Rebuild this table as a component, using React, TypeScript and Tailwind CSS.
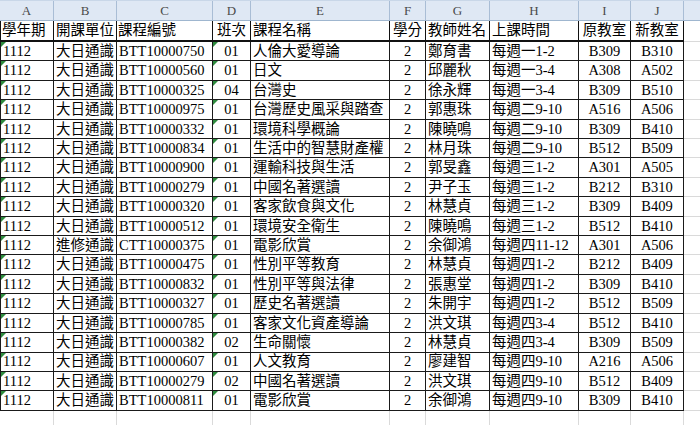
import React from "react";

const cols = [
  { w: "w-[54px]", al: "justify-start pl-[2px]", tri: true },
  { w: "w-[63px]", al: "justify-start pl-[2px]", tri: false },
  { w: "w-[96px]", al: "justify-start pl-[2px]", tri: false },
  { w: "w-[38px]", al: "justify-center", tri: true },
  { w: "w-[139px]", al: "justify-start pl-[2px]", tri: false },
  { w: "w-[36px]", al: "justify-center", tri: false },
  { w: "w-[64px]", al: "justify-start pl-[2px]", tri: false },
  { w: "w-[89px]", al: "justify-start pl-[2px]", tri: false },
  { w: "w-[52px]", al: "justify-center", tri: false },
  { w: "w-[53px]", al: "justify-center", tri: false },
];

const letters = ["A", "B", "C", "D", "E", "F", "G", "H", "I", "J"];

const header = ["學年期", "開課單位", "課程編號", "班次", "課程名稱", "學分", "教師姓名", "上課時間", "原教室", "新教室"];
const headerAlign = [
  "justify-start pl-[1px]",
  "justify-start pl-[2px]",
  "justify-start pl-[1px]",
  "justify-center",
  "justify-start pl-[2px]",
  "justify-center",
  "justify-start pl-[2px]",
  "justify-start pl-[2px]",
  "justify-center",
  "justify-center",
];

const rows: string[][] = [
  ["1112", "大日通識", "BTT10000750", "01", "人倫大愛導論", "2", "鄭育書", "每週一1-2", "B309", "B310"],
  ["1112", "大日通識", "BTT10000560", "01", "日文", "2", "邱麗秋", "每週一3-4", "A308", "A502"],
  ["1112", "大日通識", "BTT10000325", "04", "台灣史", "2", "徐永輝", "每週一3-4", "B309", "B510"],
  ["1112", "大日通識", "BTT10000975", "01", "台灣歷史風采與踏查", "2", "郭惠珠", "每週二9-10", "A516", "A506"],
  ["1112", "大日通識", "BTT10000332", "01", "環境科學概論", "2", "陳曉鳴", "每週二9-10", "B309", "B410"],
  ["1112", "大日通識", "BTT10000834", "01", "生活中的智慧財產權", "2", "林月珠", "每週二9-10", "B512", "B509"],
  ["1112", "大日通識", "BTT10000900", "01", "運輸科技與生活", "2", "郭旻鑫", "每週三1-2", "A301", "A505"],
  ["1112", "大日通識", "BTT10000279", "01", "中國名著選讀", "2", "尹子玉", "每週三1-2", "B212", "B310"],
  ["1112", "大日通識", "BTT10000320", "01", "客家飲食與文化", "2", "林慧貞", "每週三1-2", "B309", "B409"],
  ["1112", "大日通識", "BTT10000512", "01", "環境安全衛生", "2", "陳曉鳴", "每週三1-2", "B512", "B410"],
  ["1112", "進修通識", "CTT10000375", "01", "電影欣賞", "2", "余御鴻", "每週四11-12", "A301", "A506"],
  ["1112", "大日通識", "BTT10000475", "01", "性別平等教育", "2", "林慧貞", "每週四1-2", "B212", "B409"],
  ["1112", "大日通識", "BTT10000832", "01", "性別平等與法律", "2", "張惠堂", "每週四1-2", "B309", "B410"],
  ["1112", "大日通識", "BTT10000327", "01", "歷史名著選讀", "2", "朱開宇", "每週四1-2", "B512", "B509"],
  ["1112", "大日通識", "BTT10000785", "01", "客家文化資產導論", "2", "洪文琪", "每週四3-4", "B512", "B410"],
  ["1112", "大日通識", "BTT10000382", "02", "生命關懷", "2", "林慧貞", "每週四3-4", "B309", "B509"],
  ["1112", "大日通識", "BTT10000607", "01", "人文教育", "2", "廖建智", "每週四9-10", "A216", "A506"],
  ["1112", "大日通識", "BTT10000279", "02", "中國名著選讀", "2", "洪文琪", "每週四9-10", "B512", "B409"],
  ["1112", "大日通識", "BTT10000811", "01", "電影欣賞", "2", "余御鴻", "每週四9-10", "B309", "B410"],
];

function Tri() {
  return (
    <span className="absolute left-0 top-0 w-0 h-0 border-t-[5px] border-r-[5px] border-t-[#2e8b3e] border-r-transparent" />
  );
}

export default function App() {
  return (
    <div
      className="w-[700px] h-[425px] overflow-hidden bg-white text-black"
      style={{ fontFamily: '"Liberation Serif", "Noto Sans CJK TC", serif' }}
    >
      {/* column letters */}
      <div className="flex h-[21px] bg-[#dfe8f4] border-t border-[#c9d7e8] border-b border-b-[#9fb6cf]">
        {cols.map((c, i) => (
          <div
            key={i}
            className={`${c.w} shrink-0 flex items-center justify-center border-r border-[#a9bdd5] text-[13px] text-[#4a4a4a] leading-none`}
          >
            {letters[i]}
          </div>
        ))}
        <div className="flex-1" />
      </div>

      {/* header row */}
      <div className="flex h-[21px] text-[14.5px] leading-none">
        {cols.map((c, i) => (
          <div
            key={i}
            className={`${c.w} shrink-0 flex items-center overflow-hidden whitespace-nowrap border-r border-b-2 border-[#111] ${i === 0 ? "border-l" : ""} ${headerAlign[i]}`}
          >
            {header[i]}
          </div>
        ))}
        <div className="flex-1 border-b border-[#dadada]" />
      </div>

      {/* data rows */}
      {rows.map((r, ri) => (
        <div key={ri} className="flex h-[19.42px] text-[14.5px] leading-none">
          {cols.map((c, i) => (
            <div
              key={i}
              className={`${c.w} shrink-0 relative flex items-center overflow-hidden whitespace-nowrap border-r border-b border-[#1a1a1a] ${i === 0 ? "border-l" : ""} ${c.al}`}
            >
              {c.tri && <Tri />}
              {r[i]}
            </div>
          ))}
          <div className="flex-1 border-b border-[#dadada]" />
        </div>
      ))}

      {/* empty row */}
      <div className="flex h-[20px]">
        {cols.map((c, i) => (
          <div key={i} className={`${c.w} shrink-0 border-r border-b border-[#dadada]`} />
        ))}
        <div className="flex-1 border-b border-[#dadada]" />
      </div>
    </div>
  );
}
